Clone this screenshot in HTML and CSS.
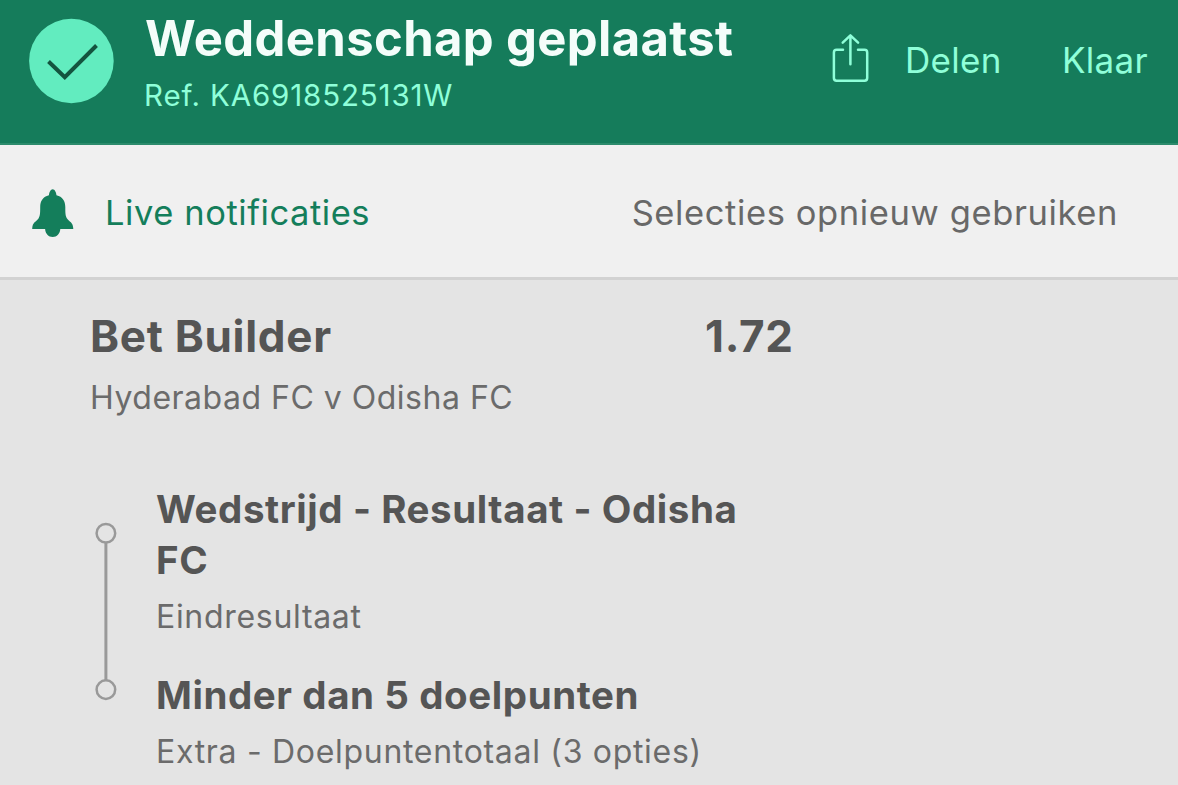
FILE: index.html
```html
<!DOCTYPE html>
<html lang="nl">
<head>
<meta charset="utf-8">
<title>Weddenschap geplaatst</title>
<link rel="stylesheet" href="styles.css">
</head>
<body>
<header class="header">
  <svg class="check" viewBox="0 0 86 86"><circle cx="43.400" cy="43" r="42.300" fill="#62ecbf"/><path d="M20.500 43.500 36.800 59.200 68.500 27.500" fill="none" stroke="#14543f" stroke-width="4"/></svg>
  <div class="heading">
    <h1 class="title">Weddenschap geplaatst</h1>
    <p class="ref">Ref. KA6918525131W</p>
  </div>
  <nav class="actions">
    <a class="action share">
      <svg class="share-icon" viewBox="0 0 40 52" fill="none" stroke="#8fffd9" stroke-width="2.500" stroke-linecap="round" stroke-linejoin="round"><path d="M13 16.700H6.600q-2.700 0-2.700 2.700V45q0 2.700 2.700 2.700h27.900q2.700 0 2.700-2.700V19.400q0-2.700-2.700-2.700H28M20.400 31.300V2.500M12.700 9.700l7.700-7.400 7.700 7.400"/></svg>
      <span class="delen">Delen</span>
    </a>
    <a class="action klaar">Klaar</a>
  </nav>
</header>
<section class="toolbar">
  <a class="live">
    <svg class="bell" viewBox="0 0 42 50"><path fill="#147e5b" d="M20.700.3c2 0 3.500 3 3.800 6C30.500 7.800 33.300 12 33.300 18c0 6.500.2 9 1.700 11.500 2 3.200 6.300 3.500 6.300 10.500H28.300C28 44.500 25 48 20.700 48s-7.300-3.500-7.600-8H.2c0-7 4.300-7.300 6.300-10.500C8 27 8.200 24.500 8.200 18c0-6 2.800-10.200 8.700-11.700.3-3 1.800-6 3.800-6z"/></svg>
    <span class="live-label">Live notificaties</span>
  </a>
  <a class="reuse">Selecties opnieuw gebruiken</a>
</section>
<main class="bet">
  <div class="bet-head">
    <h2 class="bet-title">Bet Builder</h2>
    <span class="odds">1.72</span>
  </div>
  <p class="match">Hyderabad FC v Odisha FC</p>
  <div class="legs">
    <svg class="rail" viewBox="0 0 22 180" fill="none" stroke="#999"><circle cx="10.900" cy="11.300" r="9.300" stroke-width="2.500"/><circle cx="10.900" cy="167.600" r="9.300" stroke-width="2.500"/><path d="M10.900 20.600V158.300" stroke-width="3"/></svg>
    <ul class="list">
      <li class="leg">
        <h3 class="pick">Wedstrijd - Resultaat - Odisha<br>FC</h3>
        <p class="market">Eindresultaat</p>
      </li>
      <li class="leg">
        <h3 class="pick">Minder dan 5 doelpunten</h3>
        <p class="market">Extra - Doelpuntentotaal (3 opties)</p>
      </li>
    </ul>
  </div>
</main>
</body>
</html>
```
FILE: styles.css
```css
* { box-sizing: border-box; margin: 0; padding: 0; }
body { width: 1178px; height: 785px; overflow: hidden; background: #e4e4e4; font-family: Inter, Roboto, "Liberation Sans", sans-serif; font-feature-settings: "calt" 0; white-space: nowrap; }
ul { list-style: none; }
svg { display: block; flex: none; }

.header { display: flex; align-items: flex-start; height: 145px; padding-left: 28px; background: #157c5b; border-bottom: 2px solid #2c8b6c; }
.check { width: 86px; height: 86px; margin-top: 18px; }
.heading { width: 687px; padding: 9px 0 0 31px; }
.title { font-size: 49px; line-height: 60px; font-weight: 700; color: #f4fdfa; letter-spacing: 0.350px; }
.ref { margin: 6px 0 0 -1px; font-size: 29.500px; line-height: 40px; color: #8fffd9; letter-spacing: 0.850px; }
.actions { display: flex; gap: 58px; margin-top: 33px; color: #8fffd9; }
.action { display: flex; font-size: 35px; line-height: 54px; letter-spacing: 0.300px; }
.share { gap: 35px; width: 203px; }
.share-icon { width: 40px; height: 52px; margin-left: 29px; }

.toolbar { display: flex; justify-content: space-between; height: 135px; padding: 44px 60px 0 32px; background: #f0f0f0; border-bottom: 3px solid #d2d2d2; font-size: 34.500px; line-height: 48px; letter-spacing: 0.560px; }
.live { display: flex; gap: 31px; color: #147e5b; }
.bell { width: 42px; height: 50px; }
.reuse { color: #686868; letter-spacing: 0.610px; }

.bet { padding: 28px 0 0 90px; color: #555; }
.bet-head { display: flex; line-height: 56px; }
.bet-title, .odds { font-size: 44px; font-weight: 700; letter-spacing: 0.700px; }
.bet-title { width: 615px; }
.match { margin-top: 13px; font-size: 32px; line-height: 42px; color: #6b6b6b; letter-spacing: 0.500px; }
.legs { display: flex; gap: 39px; padding: 65px 0 0 5px; }
.rail { width: 22px; height: 180px; margin-top: 38px; }
.pick { font-size: 38.500px; line-height: 51px; font-weight: 700; letter-spacing: 0.580px; }
.market { margin-top: 10px; font-size: 32px; line-height: 42px; color: #6b6b6b; letter-spacing: 0.690px; }
.leg + .leg { margin-top: 32px; }
```
